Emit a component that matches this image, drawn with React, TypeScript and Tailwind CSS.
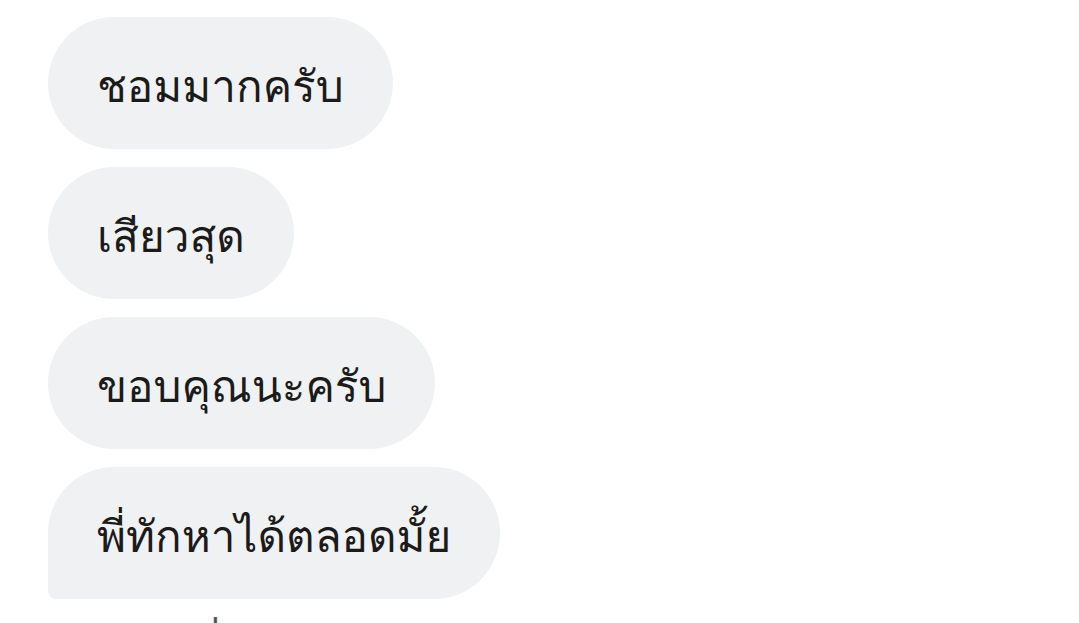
const messages = [
  "ชอมมากครับ",
  "เสียวสุด",
  "ขอบคุณนะครับ",
  "พี่ทักหาได้ตลอดมั้ย",
];

export default function App() {
  return (
    <div className="min-h-screen bg-white pl-12 pt-[17px] font-['Loma','Noto_Sans',sans-serif] text-[#1b1b1b]">
      <div className="flex flex-col items-start gap-[18px]">
        {messages.map((text, i) => (
          <div
            key={i}
            className={
              i === messages.length - 1
                ? "flex h-[132px] items-center rounded-[66px] rounded-bl-[8px] bg-[#eff1f2] px-[49px] text-[44px] leading-none"
                : "flex h-[132px] items-center rounded-[66px] bg-[#eff1f2] px-[49px] text-[44px] leading-none"
            }
          >
            <span className="pt-[6px]">{text}</span>
          </div>
        ))}
      </div>
      <p className="mt-[14px] pl-[144px] text-[44px] text-[#555]">ที่</p>
    </div>
  );
}
